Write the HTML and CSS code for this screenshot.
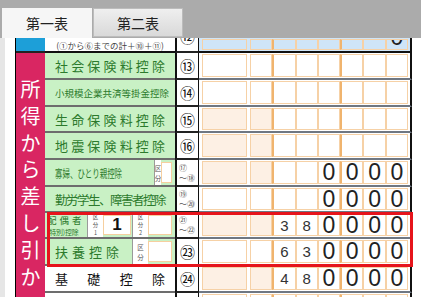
FILE: index.html
```html
<!DOCTYPE html>
<html lang="ja">
<head>
  <meta charset="UTF-8" />
  <meta name="viewport" content="width=device-width, initial-scale=1.0"/>
  <title>申告書 第一表</title>
  <link rel="stylesheet" href="styles.css">
</head>
<body>
  <div class="tabbar">
    <div class="tab active">第一表</div>
    <div class="tab">第二表</div>
  </div>

  <div class="page">
    <div class="sheet">
      <div class="side-top"></div>
      <div class="side">
        <span>所</span><span>得</span><span>か</span><span>ら</span><span>差</span><span>し</span><span>引</span><span>か</span>
      </div>

      <!-- ⑫ (scrolled, only the bottom shows) -->
      <div class="lbl note">(①から⑥までの計＋⑩＋⑪)</div>
      <div class="num cut"><span>⑫</span></div>
      <div class="amt blue"><span class="w"></span><span></span><span class="k"></span><span></span><span></span><span class="k"></span><span></span><span class="cut"><b class="z">0</b></span></div>

      <!-- ⑬ -->
      <div class="lbl"><span class="fill">社会保険料控除</span></div>
      <div class="num">⑬</div>
      <div class="amt"><span class="w"></span><span></span><span class="k"></span><span></span><span></span><span class="k"></span><span></span><span></span></div>

      <!-- ⑭ -->
      <div class="lbl small"><span class="fill">小規模企業共済等掛金控除</span></div>
      <div class="num">⑭</div>
      <div class="amt"><span class="w"></span><span></span><span class="k"></span><span></span><span></span><span class="k"></span><span></span><span></span></div>

      <!-- ⑮ -->
      <div class="lbl"><span class="fill">生命保険料控除</span></div>
      <div class="num">⑮</div>
      <div class="amt pale"><span class="w"></span><span></span><span class="k"></span><span></span><span></span><span class="k"></span><span></span><span></span></div>

      <!-- ⑯ -->
      <div class="lbl"><span class="fill">地震保険料控除</span></div>
      <div class="num">⑯</div>
      <div class="amt pale"><span class="w"></span><span></span><span class="k"></span><span></span><span></span><span class="k"></span><span></span><span></span></div>

      <!-- ⑰〜⑱ -->
      <div class="lbl sub">
        <span class="txt"><em class="squeeze">寡婦、ひとり親控除</em></span>
        <span class="kb"><i>区</i><i>分</i></span>
        <span class="box"></span>
      </div>
      <div class="num two"><span>⑰</span><span>～⑱</span></div>
      <div class="amt pale"><span class="w"></span><span></span><span class="k"></span><span></span><span><b class="z">0</b></span><span class="k"><b class="z">0</b></span><span><b class="z">0</b></span><span><b class="z">0</b></span></div>

      <!-- ⑲〜⑳ -->
      <div class="lbl"><span class="fill wide">勤労学生、障害者控除</span></div>
      <div class="num two"><span>⑲</span><span>～⑳</span></div>
      <div class="amt"><span class="w"></span><span></span><span class="k"></span><span></span><span><b class="z">0</b></span><span class="k"><b class="z">0</b></span><span><b class="z">0</b></span><span><b class="z">0</b></span></div>

      <!-- ㉑〜㉒ -->
      <div class="lbl sub spouse">
        <span class="txt stack"><span class="big">配偶者</span><span class="tiny">(特別)控除</span></span>
        <span class="kb three"><i>区</i><i>分</i><i>1</i></span>
        <span class="box wide-box"><b>1</b></span>
        <span class="kb three"><i>区</i><i>分</i><i>2</i></span>
        <span class="box"></span>
      </div>
      <div class="num two"><span>㉑</span><span>～㉒</span></div>
      <div class="amt pale"><span class="w"></span><span></span><span class="k"><b class="d">3</b></span><span><b class="d">8</b></span><span><b class="z">0</b></span><span class="k"><b class="z">0</b></span><span><b class="z">0</b></span><span><b class="z">0</b></span></div>

      <!-- ㉓ -->
      <div class="lbl sub">
        <span class="txt"><span class="spaced">扶養控除</span></span>
        <span class="kb"><i>区</i><i>分</i></span>
        <span class="box"></span>
      </div>
      <div class="num">㉓</div>
      <div class="amt"><span class="w"></span><span></span><span class="k"><b class="d">6</b></span><span><b class="d">3</b></span><span><b class="z">0</b></span><span class="k"><b class="z">0</b></span><span><b class="z">0</b></span><span><b class="z">0</b></span></div>

      <!-- ㉔ -->
      <div class="lbl plain"><span class="fill">基礎控除</span></div>
      <div class="num">㉔</div>
      <div class="amt pale"><span class="w"></span><span></span><span class="k"><b class="d">4</b></span><span><b class="d">8</b></span><span><b class="z">0</b></span><span class="k"><b class="z">0</b></span><span><b class="z">0</b></span><span><b class="z">0</b></span></div>

      <!-- next row, cut off -->
      <div class="lbl plain"></div>
      <div class="num"></div>
      <div class="amt"><span class="w"></span><span></span><span class="k"></span><span></span><span></span><span class="k"></span><span></span><span></span></div>

      <div class="highlight"></div>
    </div>
  </div>
</body>
</html>
```

FILE: styles.css
```css
* {
  box-sizing: border-box;
}

body {
  margin: 0;
  width: 421px;
  height: 297px;
  overflow: hidden;
  background: #fff;
  color: #222;
  font-family: "Noto Sans CJK JP", sans-serif;
}

/* tabs */
.tabbar {
  display: flex;
  align-items: flex-end;
  height: 38px;
  padding-left: 2px;
  background: #ababab;
}

.tab {
  display: flex;
  align-items: center;
  justify-content: center;
  width: 90px;
  height: 29px;
  margin: 0 1px 1px 0;
  font-size: 14px;
  background: linear-gradient(#efefef, #d9d9d9);
  border: 1px solid #bcbcbc;
}

.tab.active {
  height: 30px;
  margin-bottom: 0;
  background: #f6f6f6;
  border: none;
}

/* sheet */
.page {
  height: 259px;
  padding-left: 10px;
  border-left: 5px solid #e6e6e6;
  overflow: hidden;
}

.sheet {
  position: relative;
  display: grid;
  grid-template-columns: 29px 130px 24px 213px;
  grid-template-rows: 15px 27px 27px 26px 27px 27px 26px 26px 27px 27px 10px;
  width: 397px;
  border-left: 1px solid #000;
}

.side-top {
  grid-column: 1;
  grid-row: 1;
  background: #1d9fd8;
  border-bottom: 2px solid #222;
}

.side {
  grid-column: 1;
  grid-row: 2 / -1;
  display: flex;
  flex-direction: column;
  align-items: center;
  padding-top: 23px;
  background: #d92662;
  color: #fff;
  font-size: 20px;
  line-height: 26.8px;
}

/* label column */
.lbl {
  grid-column: 2;
  display: flex;
  align-items: center;
  padding: 0 10px;
  background: #c9f1c5;
  color: #2c7a2c;
  font-size: 13px;
  white-space: nowrap;
  border-bottom: 2px solid #6d6d6d;
}

.lbl .fill {
  flex: 1;
  text-align: justify;
  text-align-last: justify;
}

.lbl.small {
  font-size: 9.5px;
}

.lbl .wide {
  font-size: 12.5px;
  letter-spacing: -1.6px;
}

.lbl.plain {
  background: #fff;
  color: #111;
}

.lbl.note {
  justify-content: center;
  padding: 0;
  background: #fff;
  color: #444;
  font-size: 8.5px;
  border-bottom-color: #111;
}

.lbl.sub {
  padding-right: 0;
}

.lbl.sub .txt {
  flex: 1;
}

.squeeze {
  display: inline-block;
  font-style: normal;
  font-size: 11px;
  transform: scaleX(0.68);
  transform-origin: left center;
}

.spaced {
  letter-spacing: 4px;
}

.lbl.spouse {
  padding-left: 2px;
}

.stack {
  display: flex;
  flex-direction: column;
}

.stack .big {
  font-size: 9.5px;
  line-height: 14px;
  letter-spacing: 3px;
}

.stack .tiny {
  font-size: 7px;
  line-height: 10px;
  letter-spacing: -0.2px;
}

.kb {
  align-self: stretch;
  display: flex;
  flex-direction: column;
  justify-content: center;
  align-items: center;
  width: 16px;
  background: #fff;
  border-left: 1px solid #9a9a9a;
  color: #555;
  font-size: 6.5px;
  line-height: 10px;
}

.kb.three {
  font-size: 5.5px;
  line-height: 8px;
}

.kb i {
  font-style: normal;
}

.box {
  align-self: stretch;
  display: flex;
  align-items: center;
  justify-content: center;
  width: 24px;
  margin: 2px 3px 2px 0;
  background: #fff;
  border: 1px solid #f6cf9f;
}

.box.wide-box {
  width: 28px;
  margin-right: 1px;
}

.box b {
  color: #111;
  font-family: "Liberation Sans", sans-serif;
  font-size: 17px;
}

/* number column */
.num {
  grid-column: 3;
  display: flex;
  align-items: center;
  justify-content: center;
  background: #fff;
  color: #111;
  font-size: 15px;
  border-left: 2px solid #111;
  border-right: 1px solid #111;
  border-bottom: 2px solid #222;
}

.num.cut {
  align-items: flex-start;
  overflow: hidden;
}

.num.cut span {
  margin-top: -9px;
  line-height: 15px;
}

.num.two {
  flex-direction: column;
  align-items: flex-start;
  padding-left: 2px;
  color: #555;
  font-size: 8px;
  line-height: 10px;
}

/* amount column */
.amt {
  grid-column: 4;
  display: flex;
  padding: 1px 2px 1px 3px;
  border-right: 2px solid #111;
  border-bottom: 2px solid #6f7782;
}

.amt span {
  flex: 1;
  display: flex;
  align-items: center;
  justify-content: center;
  background: #fff;
  border: 1px solid #f6d1a6;
  font-family: "Liberation Sans", sans-serif;
}

.amt .w {
  flex: 0 0 45px;
  margin-right: 3px;
}

.amt .k {
  border-left: 2px solid #f0b46e;
}

.amt.pale .w,
.amt.pale span:nth-child(2) {
  background: #fdf0e4;
}

.amt.blue {
  background: #cfe5f8;
  border-bottom-color: #111;
}

.amt.blue span {
  background: #cfe5f8;
}

.amt .cut {
  align-items: flex-start;
  overflow: hidden;
}

.amt .cut b {
  margin-top: -14px;
  line-height: 1;
}

.z {
  font-weight: normal;
  font-size: 23px;
  color: #222;
}

.d {
  font-weight: normal;
  font-size: 15px;
  color: #333;
}

.highlight {
  position: absolute;
  left: 31px;
  top: 174px;
  width: 366px;
  height: 55px;
  border: 3px solid #e6141b;
  pointer-events: none;
}
```
